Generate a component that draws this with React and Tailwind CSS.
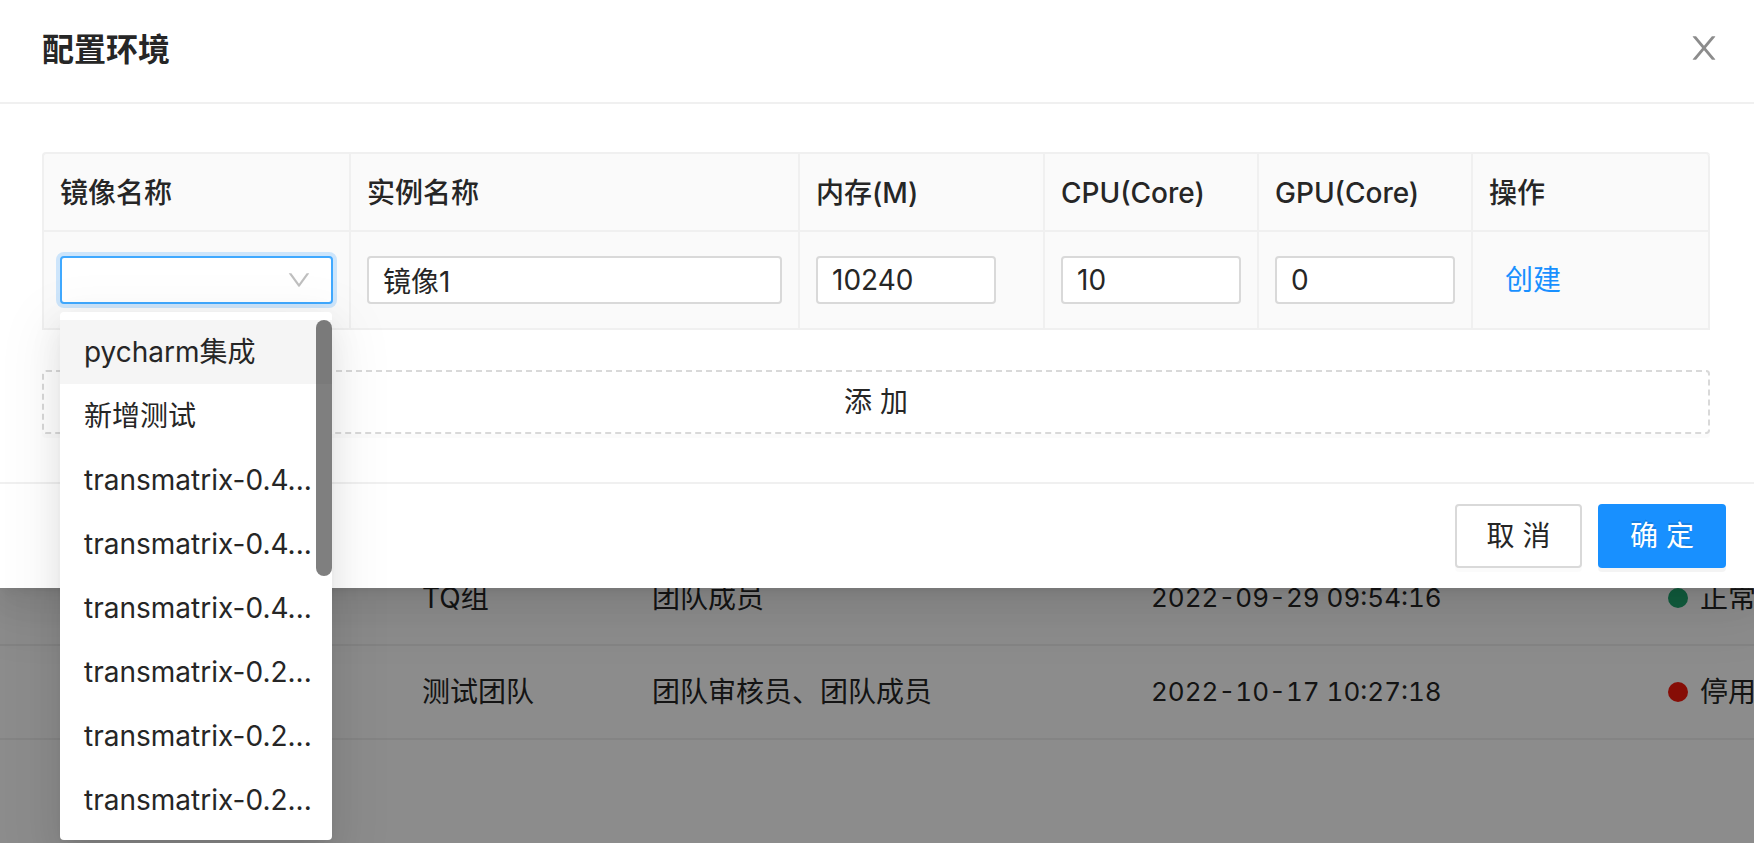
const INSTANCE_IMAGES = [
  "pycharm集成",
  "新增测试",
  "transmatrix-0.4...",
  "transmatrix-0.4...",
  "transmatrix-0.4...",
  "transmatrix-0.2...",
  "transmatrix-0.2...",
  "transmatrix-0.2...",
];

const MEMBERS = [
  { team: "TQ组", role: "团队成员", time: "2022-09-29 09:54:16", status: "正常", dot: "bg-[#1fa971]" },
  { team: "测试团队", role: "团队审核员、团队成员", time: "2022-10-17 10:27:18", status: "停用", dot: "bg-[#f5190c]" },
];

function CloseIcon() {
  return (
    <svg viewBox="64 64 896 896" className="size-8" fill="currentColor" aria-hidden="true">
      <path d="M563.8 512l262.5-312.9c4.4-5.2.7-13.1-6.1-13.1h-79.8c-4.7 0-9.2 2.1-12.3 5.7L511.6 449.8 295.1 191.7c-3-3.6-7.5-5.7-12.3-5.7H203c-6.8 0-10.5 7.9-6.1 13.1L459.4 512 196.9 824.9A7.95 7.95 0 0 0 203 838h79.8c4.7 0 9.2-2.1 12.3-5.7l216.5-258.1 216.5 258.1c3 3.6 7.5 5.7 12.3 5.7h79.8c6.8 0 10.5-7.9 6.1-13.1L563.8 512z" />
    </svg>
  );
}

function DownIcon() {
  return (
    <svg viewBox="64 64 896 896" className="size-6" fill="currentColor" aria-hidden="true">
      <path d="M884 256h-75c-5.1 0-9.9 2.5-12.9 6.6L512 654.2 227.9 262.6c-3-4.1-7.8-6.6-12.9-6.6h-75c-6.5 0-10.3 7.4-6.5 12.7l352.6 486.1c12.8 17.6 39 17.6 51.7 0l352.6-486.1c3.8-5.3 0-12.7-6.4-12.7z" />
    </svg>
  );
}

function MemberTable() {
  return (
    <main className="col-start-1 row-start-1 min-w-0 overflow-hidden bg-white pt-[552px]">
      <table className="w-full table-fixed border-separate border-spacing-0">
        <colgroup>
          <col />
          <col className="w-[230px]" />
          <col className="w-[499px]" />
          <col className="w-[517px]" />
          <col className="w-[102px]" />
        </colgroup>
        <tbody>
          {MEMBERS.map((m) => (
            <tr key={m.time} className="h-[94px] whitespace-nowrap">
              <td className="border-b-2 border-[#f0f0f0]" />
              <td className="border-b-2 border-[#f0f0f0] px-4">{m.team}</td>
              <td className="border-b-2 border-[#f0f0f0] px-4">{m.role}</td>
              <td className="border-b-2 border-[#f0f0f0] px-4 text-[26px] leading-[44px] tabular-nums">{m.time}</td>
              <td className="border-b-2 border-[#f0f0f0] pl-4">
                <div className="flex items-center gap-3">
                  <span className={`size-5 shrink-0 rounded-full ${m.dot}`} />
                  <span>{m.status}</span>
                </div>
              </td>
            </tr>
          ))}
        </tbody>
      </table>
    </main>
  );
}

function HeadCell({ children, className = "" }) {
  return (
    <th className={`border-r-2 border-b-2 border-[#f0f0f0] px-4 pt-[17px] pb-[15px] text-left font-medium ${className}`}>
      {children}
    </th>
  );
}

function Cell({ children }) {
  return <td className="border-r-2 border-b-2 border-[#f0f0f0] px-4 py-6">{children}</td>;
}

function TextBox({ label, value, className }) {
  return (
    <input
      type="text"
      aria-label={label}
      defaultValue={value}
      className={`block h-12 rounded-sm border-2 border-[#d9d9d9] bg-white px-[14px] outline-none ${className}`}
    />
  );
}

function ImageSelect() {
  return (
    <div className="relative">
      <select
        aria-label="镜像名称"
        defaultValue=""
        className="block h-12 w-full appearance-none rounded-sm border-2 border-[#40a9ff] bg-white px-[14px] shadow-[0_0_0_4px_rgba(24,144,255,0.2)] outline-none"
      >
        <option value="" />
      </select>
      <span className="pointer-events-none absolute inset-y-0 right-[22px] flex items-center text-black/25">
        <DownIcon />
      </span>
      <div className="absolute top-14 left-0 z-10 w-[272px] rounded-sm bg-white py-2 shadow-[0_6px_12px_-8px_rgba(0,0,0,0.12),0_12px_32px_0_rgba(0,0,0,0.08),0_18px_56px_16px_rgba(0,0,0,0.05)]">
        <ul role="listbox" aria-label="镜像名称">
          {INSTANCE_IMAGES.map((name, i) => (
            <li
              key={i}
              role="option"
              aria-selected={i === 0}
              className={`px-6 py-[10px] whitespace-nowrap ${i === 0 ? "bg-[#f5f5f5]" : "bg-white"}`}
            >
              {name}
            </li>
          ))}
        </ul>
        <div className="absolute top-2 right-0 h-64 w-4 rounded-full bg-black/50" />
      </div>
    </div>
  );
}

function EnvironmentDialog() {
  return (
    <section
      role="dialog"
      aria-labelledby="dialog-title"
      className="bg-white shadow-[0_6px_12px_-8px_rgba(0,0,0,0.12),0_12px_32px_0_rgba(0,0,0,0.08),0_18px_56px_16px_rgba(0,0,0,0.05)]"
    >
      <header className="flex items-start justify-between border-b-2 border-[#f0f0f0] pt-7 pr-[34px] pb-[30px] pl-[42px]">
        <h1 id="dialog-title" className="text-[32px] leading-[44px] font-semibold">配置环境</h1>
        <button type="button" aria-label="关闭" className="flex h-10 items-center text-black/45">
          <CloseIcon />
        </button>
      </header>

      <div className="flex flex-col gap-10 py-12 pr-11 pl-[42px]">
        <table className="w-full table-fixed border-separate border-spacing-0 rounded-t-sm border-t-2 border-l-2 border-[#f0f0f0] bg-[#fafafa]">
          <colgroup>
            <col className="w-[307px]" />
            <col />
            <col className="w-[245px]" />
            <col className="w-[214px]" />
            <col className="w-[214px]" />
            <col className="w-[237px]" />
          </colgroup>
          <thead>
            <tr>
              <HeadCell>镜像名称</HeadCell>
              <HeadCell>实例名称</HeadCell>
              <HeadCell>内存(M)</HeadCell>
              <HeadCell>CPU(Core)</HeadCell>
              <HeadCell>GPU(Core)</HeadCell>
              <HeadCell className="rounded-tr-sm">操作</HeadCell>
            </tr>
          </thead>
          <tbody>
            <tr>
              <Cell><ImageSelect /></Cell>
              <Cell><TextBox label="实例名称" value="镜像1" className="w-full" /></Cell>
              <Cell><TextBox label="内存(M)" value="10240" className="w-[180px]" /></Cell>
              <Cell><TextBox label="CPU(Core)" value="10" className="w-[180px]" /></Cell>
              <Cell><TextBox label="GPU(Core)" value="0" className="w-[180px]" /></Cell>
              <Cell>
                <button type="button" className="block px-4 text-[#1890ff]">创建</button>
              </Cell>
            </tr>
          </tbody>
        </table>
        <button
          type="button"
          className="h-16 w-full rounded-sm border-2 border-dashed border-[#d9d9d9] bg-white shadow-[0_4px_0_rgba(0,0,0,0.016)]"
        >
          添 加
        </button>
      </div>

      <footer className="flex justify-end gap-4 border-t-2 border-[#f0f0f0] py-5 pr-7">
        <button
          type="button"
          className="h-16 w-[127px] rounded-sm border-2 border-[#d9d9d9] bg-white shadow-[0_4px_0_rgba(0,0,0,0.016)]"
        >
          取 消
        </button>
        <button
          type="button"
          className="h-16 w-32 rounded-sm bg-[#1890ff] text-white shadow-[0_4px_0_rgba(0,0,0,0.045)] text-shadow-[0_-2px_0_rgba(0,0,0,0.12)]"
        >
          确 定
        </button>
      </footer>
    </section>
  );
}

export default function App() {
  return (
    <div className="grid h-screen grid-cols-1 grid-rows-1 overflow-hidden font-['Inter','Noto_Sans_CJK_SC',sans-serif] text-[28px] leading-[44px] text-[#262626]">
      <MemberTable />
      <div className="z-10 col-start-1 row-start-1 min-w-0 bg-black/45">
        <EnvironmentDialog />
      </div>
    </div>
  );
}
